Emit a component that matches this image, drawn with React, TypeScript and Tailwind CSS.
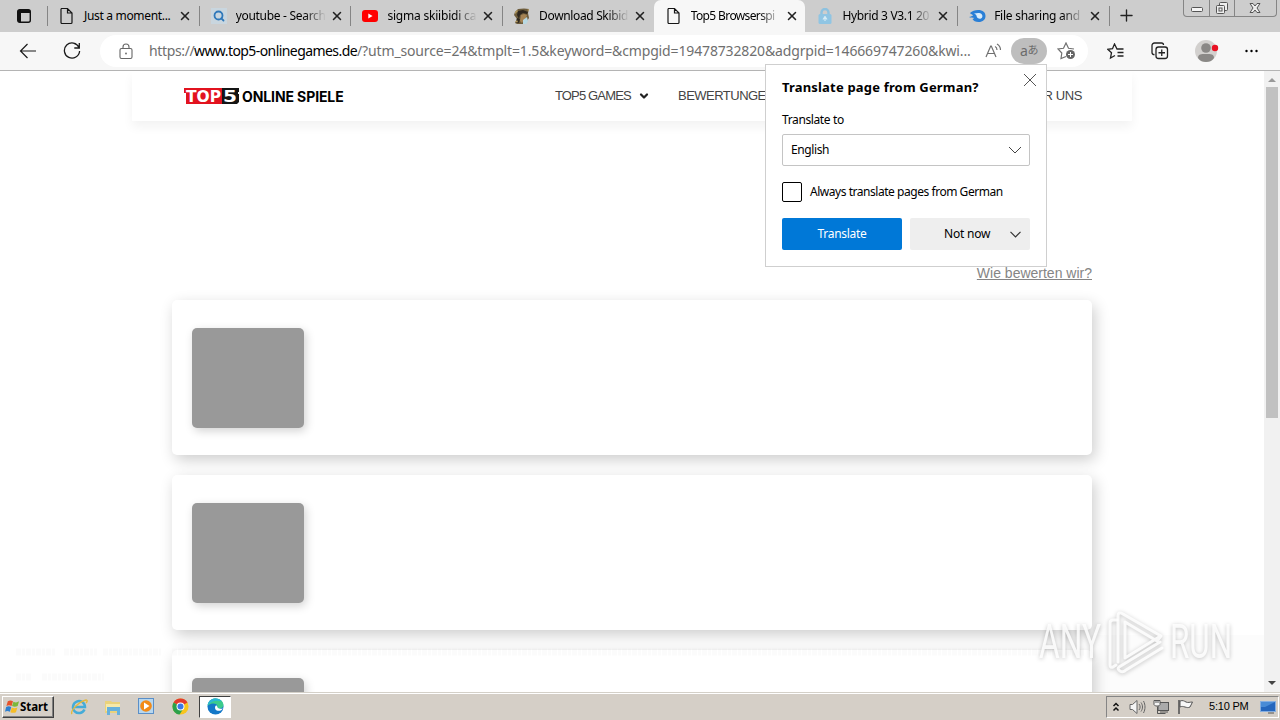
import React from "react";
import { Search, X, Plus, ChevronDown } from "lucide-react";

const PageIcon = () => (
  <svg width="16" height="18" viewBox="0 0 16 18" fill="none" stroke="#161616" strokeWidth="1.2">
    <path d="M2.5 1.500h6l4.500 4.500v9.500a1 1 0 0 1-1 1h-9a1 1 0 0 1-1-1v-13a1 1 0 0 1 .5-1zM8.500 1.500V6H13" />
  </svg>
);

const SearchIcon = () => (
  <div className="flex h-4 w-4 items-center justify-center bg-[#c9d6df]">
    <Search size={12} strokeWidth={3.6} color="#2f78ba" />
  </div>
);

const YoutubeIcon = () => (
  <svg width="16" height="16" viewBox="0 0 16 16">
    <rect x="0" y="2" width="16" height="12" rx="3" fill="#f00" />
    <path d="M6.3 5.4 10.6 8l-4.3 2.6z" fill="#fff" />
  </svg>
);

const LionIcon = () => (
  <svg width="16" height="16" viewBox="0 0 16 16">
    <path d="M1 4 4 1l6-.5L15 1l-1 4 1 5-4 6H3l-2-1 2-4-3-4z" fill="#6d5c3c" />
    <path d="M4 3l5-1 5 2-1 2-4-1-3 2-1 4-2-4zM3 10l3 1-1 4-3-1z" fill="#2f281f" />
    <path d="M7 7l3-1 3 1-1 3-2 2-2 3-2-2z" fill="#a58354" />
    <path d="M1 4l2-2 1 1-3 3zM13 2l2-1v2zM1 14l2-2 1 2z" fill="#b49a60" />
    <path d="M9 12l4-3 1 4-2 3H9z" fill="#b8d8e2" />
  </svg>
);

const BlueLockIcon = () => (
  <svg width="16" height="16" viewBox="0 0 16 16">
    <path d="M4.500 7V4.500a3.500 3.500 0 0 1 7 0V7" fill="none" stroke="#8dc2e0" strokeWidth="2.4" />
    <rect x="1.500" y="6" width="13" height="10" rx="1.500" fill="#90c5e3" />
    <path d="M8 8v5M8 8.500l-2 3M8 8.500l2 3" stroke="#d5ebf5" strokeWidth="1.200" />
  </svg>
);

const FlameIcon = () => (
  <svg width="17" height="16" viewBox="0 0 17 16">
    <path d="M0 9c2-.5 3-1 4-1.500C3 6 1 6 1 5c2-2 5-3 8-3 5 0 7.500 2.500 7.500 6S14 14 9.500 14c-3 0-5-1-6-3 1-.5 2-1 2-1-2-.5-4 0-5.500-1z" fill="#2a7fd6" />
    <path d="M5 5.500c3-.5 6-1 7.500.5s1 4-.5 4.500-3.500 0-4-1.200S8 7 5 5.500z" fill="#d9ecfb" />
  </svg>
);

const tabs = [
  { icon: <PageIcon />, title: "Just a moment...", cls: "tracking-[-0.32px]" },
  { icon: <SearchIcon />, title: "youtube - Search", cls: "tracking-[-0.3px]" },
  { icon: <YoutubeIcon />, title: "sigma skiibidi ca", cls: "tracking-[-0.2px]" },
  { icon: <LionIcon />, title: "Download Skibid", cls: "tracking-[-0.35px]" },
  { icon: <PageIcon />, title: "Top5 Browserspi", cls: "tracking-[-0.62px]", active: true },
  { icon: <BlueLockIcon />, title: "Hybrid 3 V3.1 20", cls: "tracking-[-0.33px]" },
  { icon: <FlameIcon />, title: "File sharing and", cls: "tracking-[-0.25px]" },
];

function TabStrip() {
  return (
    <div className="flex h-8 shrink-0 bg-[#cdcdcd]">
      <div className="flex w-[47px] items-center pl-[17px]">
        <svg width="14" height="14" viewBox="0 0 14 14">
          <rect x=".7" y=".7" width="12.600" height="12.600" rx="2" fill="none" stroke="#111" strokeWidth="1.4" />
          <path d="M1 1h12v3H1zM1 4h3v9H1z" fill="#111" />
        </svg>
      </div>
      {tabs.map((t, i) => (
        <div
          key={t.title}
          className={"flex w-[151.7px] items-center " + (t.active ? "rounded-t-[7px] bg-[#f7f7f7]" : "")}
        >
          <div className={"mr-[11px] h-5 w-px " + (i === 4 || i === 5 ? "bg-transparent" : "bg-[#858585]")} />
          <div className="flex w-[25px] shrink-0 items-center">{t.icon}</div>
          <div
            className={
              "w-[90px] shrink-0 whitespace-pre text-[12px] leading-[18px] text-black " +
              t.cls +
              (i ? " [mask-image:linear-gradient(to_right,black_68px,transparent_90px)]" : "")
            }
          >
            {t.title}
          </div>
          <X size={14} strokeWidth={2.6} color="#222" className="ml-[4px]" />
        </div>
      ))}
      <div className="flex grow">
        <div className="mt-1.5 h-5 w-px bg-[#858585]" />
        <Plus size={19} strokeWidth={1.700} color="#222" className="ml-[7px] mt-[6px]" />
        <div className="ml-auto mr-[3px] flex h-[17px] w-[94px] rounded-b border border-t-0 border-[#858585]">
          <div className="flex w-[26px] items-center justify-center border-r border-[#858585]">
            <svg width="14" height="12"><rect x="1.500" y="5.500" width="11" height="4" rx="1" fill="#f5f5f5" stroke="#555" /></svg>
          </div>
          <div className="flex w-[25px] items-center justify-center border-r border-[#858585]">
            <svg width="14" height="14" fill="#eee" stroke="#555">
              <rect x="4.500" y="1.500" width="8" height="8" rx="1" />
              <rect x="1.500" y="4.500" width="8" height="8" rx="1" />
              <rect x="4" y="7" width="3" height="3" />
            </svg>
          </div>
          <div className="flex grow items-center justify-center pr-0.5">
            <svg width="14" height="12" viewBox="0 0 14 12">
              <path d="M2 1.500h3l2 2.500 2-2.500h3L9 6l3 4.500H9L7 8l-2 2.500H2L5 6z" fill="#eee" stroke="#555" />
            </svg>
          </div>
        </div>
      </div>
    </div>
  );
}

function Toolbar() {
  return (
    <div className="flex h-[39px] shrink-0 items-center border-b border-[#b4b4b4] bg-[#f7f7f7]">
      <svg width="18" height="16" viewBox="0 0 18 16" fill="none" stroke="#1a1a1a" strokeWidth="1.200" className="ml-[19px]">
        <path d="M17 8H1.500M8.500 1 1.500 8l7 7" />
      </svg>
      <svg width="18" height="18" viewBox="0 0 18 18" fill="none" stroke="#1a1a1a" strokeWidth="1.300" className="ml-[26px]">
        <path d="M16 5.500A7.600 7.600 0 1 0 16.600 9M16.300 1v5h-5" />
      </svg>
      <div className="ml-[19px] flex h-8 w-[988px] items-center rounded-full bg-white pl-[19px]">
        <svg width="14" height="17" viewBox="0 0 14 17" fill="none" stroke="#666" strokeWidth="1.100">
          <rect x="1" y="5.500" width="12" height="10" rx="1.500" />
          <path d="M4 5.500V4a3 3 0 0 1 6 0v1.500" />
          <circle cx="7" cy="10.500" r=".9" fill="#666" stroke="none" />
        </svg>
        <div className="ml-[16px] flex w-[823px] whitespace-pre text-[14px] leading-5 text-[#6f6f6f]">
          <span className="w-[45px] tracking-[-0.35px]">https://</span>
          <span className="w-[163px] tracking-[-0.57px] text-black">www.top5-onlinegames.de</span>
          <span className="tracking-[-0.14px]">/?utm_source=24&amp;tmplt=1.5&amp;keyword=&amp;cmpgid=19478732820&amp;adgrpid=146669747260&amp;kwi...</span>
        </div>
        <svg width="18" height="16" viewBox="0 0 18 16" fill="none" stroke="#707070" strokeWidth="1.200" className="ml-[13px]">
          <path d="M1 14 5.700 3h.6L11 14M2.800 10.500h6.500M10 3.500c1.500.7 2 2 2 3.500M12 1c2.500 1.500 3.500 3.500 3.500 6" />
        </svg>
        <div className="ml-2 flex h-[26px] w-9 items-center justify-center rounded-full bg-[#bebebe] pb-0.5 text-[14px] tracking-[-0.5px] text-[#6b6b6b]">
          a<span className="text-[11px]">あ</span>
        </div>
        <svg width="19" height="18" viewBox="0 0 19 18" className="ml-[10px]">
          <path d="M9 14.500 4 16.500l.8-5.500L1 7l5.500-.7L9 1l2.500 5.300L17 7" fill="none" stroke="#707070" strokeWidth="1.200" />
          <circle cx="13.500" cy="12.500" r="4.500" fill="#666" />
          <path d="M13.500 10v5M11 12.500h5" stroke="#fff" />
        </svg>
      </div>
      <svg width="18" height="17" viewBox="0 0 18 17" fill="none" stroke="#222" strokeWidth="1.300" className="ml-[19px]">
        <path d="M16.500 6H10L7.500 1 5.500 5.700.8 6.300 4.500 9.700l-1 5.300L8 12.500M10.500 9.500h6M10.500 13h6" />
      </svg>
      <svg width="18" height="18" viewBox="0 0 18 18" fill="none" stroke="#222" strokeWidth="1.300" className="ml-[26px]">
        <path d="M3.500 12.500A2 2 0 0 1 1 10.500V3.500A2.500 2.500 0 0 1 3.500 1h7a2 2 0 0 1 2 2" />
        <rect x="5" y="5" width="11.500" height="11.500" rx="2.500" />
        <path d="M10.750 7.500v6.500M7.500 10.750H14" />
      </svg>
      <svg width="24" height="24" viewBox="0 0 24 24" className="ml-[26px]">
        <circle cx="11" cy="12" r="11" fill="#d2d0ce" />
        <circle cx="11" cy="9" r="4.800" fill="#8a8886" />
        <path d="M3 19c0-4 3-4 8-4s8 0 8 4c-2 3-5 4-8 4s-6-1-8-4z" fill="#8a8886" />
        <circle cx="20" cy="9" r="3.200" fill="#e81123" />
      </svg>
      <svg width="15" height="4" viewBox="0 0 15 4" className="ml-[25px]">
        <circle cx="2.500" cy="2" r="1.200" /><circle cx="7.500" cy="2" r="1.200" /><circle cx="12.500" cy="2" r="1.200" />
      </svg>
    </div>
  );
}

function TranslatePopup() {
  return (
    <div className="absolute left-[765px] top-[64px] z-10 h-[203px] w-[282px] border border-[#cfcfcf] bg-white px-4 pt-[12px] font-['Noto_Sans',sans-serif] text-[12px] text-black">
      <div className="flex justify-between">
        <div className="whitespace-nowrap text-[13px] font-bold leading-5 tracking-[0.18px]">Translate page from German?</div>
        <svg width="12" height="12" viewBox="0 0 12 12" stroke="#555" className="-mr-[6px] -mt-[3px]"><path d="M0 0l12 12M12 0 0 12" /></svg>
      </div>
      <div className="mt-[13px] leading-5 tracking-[-0.38px]">Translate to</div>
      <div className="mt-1 flex h-8 items-center justify-between rounded-[2px] border border-[#c4c4c4] px-2">
        <span className="tracking-[-0.4px]">English</span>
        <svg width="12" height="8" viewBox="0 0 12 8" fill="none" stroke="#444"><path d="M0 1l6 6 6-6" /></svg>
      </div>
      <div className="mt-4 flex h-5 items-center">
        <div className="h-5 w-5 rounded-[2px] border border-black" />
        <span className="ml-2 whitespace-nowrap tracking-[-0.46px]">Always translate pages from German</span>
      </div>
      <div className="mt-4 flex gap-2">
        <div className="flex h-8 w-[120px] items-center justify-center rounded-[2px] bg-[#0078d7] tracking-[-0.3px] text-white">Translate</div>
        <div className="flex h-8 w-[120px] items-center rounded-[2px] bg-[#eee] pl-[34px]">
          <span className="w-[66px] tracking-[-0.2px]">Not now</span>
          <svg width="11" height="7" viewBox="0 0 11 7" fill="none" stroke="#333" strokeWidth="1.200"><path d="M.5.8l5 5 5-5" /></svg>
        </div>
      </div>
    </div>
  );
}

const Card = () => (
  <div className="h-[155px] w-[920px] shrink-0 rounded-[5px] bg-white pl-5 pt-7 shadow-[3px_5px_15px_rgba(0,0,0,0.2)]">
    <div className="h-[100px] w-[112px] rounded-[5px] bg-[#999] shadow-[2px_3px_10px_rgba(0,0,0,0.18)]" />
  </div>
);

function Watermark() {
  return (
    <div className="absolute left-[1038px] top-[608px] z-10 h-[68px] w-[200px]">
      <svg width="200" height="68" viewBox="0 0 200 68" className="drop-shadow-[0_1px_2px_rgba(0,0,0,0.28)]">
        <g fill="white" fillOpacity=".85" fontFamily="Roboto, sans-serif" fontSize="48">
          <text x="1" y="50" textLength="62" lengthAdjust="spacingAndGlyphs">ANY</text>
          <text x="132" y="50" textLength="62" lengthAdjust="spacingAndGlyphs">RUN</text>
        </g>
        <g fill="none" stroke="#fff" strokeOpacity=".85" strokeWidth="3" strokeLinejoin="round" strokeLinecap="round">
          <path d="M79 12h-4q-3 0-3 3v42q0 3 3 2l3-2" />
          <path d="M80 54V8q0-5 5-2l38 22-4 5-32-19v36l34-21" />
          <path d="M122 34 81 59q-2 2 1 4 3 2 6-1l36-22" />
        </g>
      </svg>
    </div>
  );
}

function CookieBanner() {
  return (
    <svg width="1264" height="57" className="absolute left-0 top-[635px]">
      <rect x="1092" width="172" height="57" fill="#000" fillOpacity=".012" />
      <g stroke="#000" strokeOpacity=".016" strokeWidth="7">
        <path d="M16 17h40M64 17h33M103 17h58M172 17h912" strokeDasharray="5 1 3 1" />
        <path d="M16 42h16M42 42h62" strokeDasharray="5 1 3 1" />
      </g>
    </svg>
  );
}

function WebPage() {
  return (
    <div className="flex h-[621px] shrink-0 overflow-hidden bg-white">
      <div className="flex w-[1264px] flex-col overflow-hidden">
        <div className="ml-[132px] flex h-[50px] w-[1000px] shrink-0 items-center bg-white pl-[52px] font-['Liberation_Sans',sans-serif] text-[13px] text-[#444] shadow-[0_6px_10px_rgba(0,0,0,0.05)]">
          <svg width="55" height="16" viewBox="0 0 55 16">
            <path d="M0 0h38v16H2V5H0z" fill="#e2131f" />
            <path d="M38 0h17v4h-1v2h1v8l-2 2H38z" fill="#151515" />
            <text x="2" y="14" textLength="35" lengthAdjust="spacingAndGlyphs" fontFamily="DejaVu Sans, sans-serif" fontWeight="700" fontSize="16" fill="#fff">TOP</text>
            <text x="39" y="14" textLength="14" lengthAdjust="spacingAndGlyphs" fontFamily="DejaVu Sans, sans-serif" fontWeight="700" fontSize="16" fill="#fff">5</text>
          </svg>
          <span className="ml-[3px] w-[313px] whitespace-nowrap font-['Inter',sans-serif] text-[14px] font-bold tracking-[-0.1px] text-black">ONLINE SPIELE</span>
          <span className="w-[83px] whitespace-nowrap tracking-[-0.85px]">TOP5 GAMES</span>
          <ChevronDown size={12} strokeWidth={4.500} color="#222" />
          <span className="ml-[28px] w-[341px] whitespace-nowrap tracking-[-0.52px]">BEWERTUNGEN</span>
          <span className="-ml-px whitespace-nowrap tracking-[-0.4px]">ÜBER UNS</span>
        </div>
        <div className="mt-[144px] flex w-[1092px] shrink-0 justify-end font-['Liberation_Sans',sans-serif] text-[14px] leading-4 text-[#858585] underline">Wie bewerten wir?</div>
        <div className="mt-[19px] flex flex-col gap-5 pl-[172px]">
          <Card />
          <Card />
          <Card />
        </div>
      </div>
      <div className="flex w-4 flex-col items-center bg-[#f1f1f1]">
        <svg width="8" height="16"><path d="M0 11l4-4 4 4z" fill="#999" /></svg>
        <div className="h-[331px] w-3 bg-[#c1c1c1]" />
        <svg width="8" height="16" className="mt-auto"><path d="M0 5h8L4 9z" fill="#444" /></svg>
      </div>
    </div>
  );
}

function Taskbar() {
  return (
    <div className="flex h-7 shrink-0 items-center border-t border-[#d4d0c8] bg-[#d5cfc7] shadow-[inset_0_1px_0_white]">
      <div className="ml-0.5 flex h-[22px] w-[52px] items-center border border-b-[#404040] border-l-white border-r-[#404040] border-t-white pl-[2px] font-['Noto_Sans',sans-serif] text-[11.5px] font-bold tracking-[-0.1px] text-black shadow-[inset_-1px_-1px_0_#808080]">
        <svg width="15" height="15" viewBox="0 0 16 15" className="shrink-0">
          <path d="M3 2c2-1.500 4-1 5.500 0L7 7c-2-1-3.500-1-5.500 0z" fill="#e6532b" />
          <path d="M9 2.500c2 1 4 1 6-.5l-1.500 5c-2 1-4 1-6 0z" fill="#7cb83a" />
          <path d="M1.200 8c2-1 3.500-1 5.500 0l-1.500 5c-2-1-3.500-1-5.200 0z" fill="#2d7fd0" />
          <path d="M7.200 8.500c2 1 4 1 6 0l-1.500 5c-2 1-4 1-6 0z" fill="#f6bd27" />
        </svg>
        <span>Start</span>
      </div>
      <svg width="18" height="18" viewBox="0 0 18 18" className="ml-[16px]">
        <path d="M14.500 11.500A6 6 0 1 1 15 9H5" fill="none" stroke="#45acd8" strokeWidth="2.500" />
        <path d="M2 16C0 13 8 4 16 2c2 0 1 2 0 3" fill="none" stroke="#e4b93c" strokeWidth="1.400" />
      </svg>
      <svg width="18" height="18" viewBox="0 0 18 18" className="ml-4">
        <path d="M1 3h6l1 1h8v11H1z" fill="#ead27b" />
        <path d="M2 6h14v7H2z" fill="#f6e9a9" />
        <path d="M3 9h13v8h-3v-4H6v4H3z" fill="#67b1dc" />
      </svg>
      <svg width="17" height="17" viewBox="0 0 17 17" className="ml-4">
        <rect x=".5" y=".5" width="15" height="15" fill="#b8d7ee" stroke="#5a8fc8" />
        <circle cx="8" cy="8" r="5.800" fill="#f28a16" />
        <path d="M6 4.500 11.500 8 6 11.500z" fill="#fff" />
      </svg>
      <svg width="17" height="17" viewBox="0 0 18 18" className="ml-[17px]">
        <circle cx="9" cy="9" r="8.500" fill="#f8c51c" />
        <path d="M9 9 1.600 4.800A8.500 8.500 0 0 1 16.400 4.800z" fill="#e33b2e" />
        <path d="M9 9 1.600 4.800A8.500 8.500 0 0 0 8 17.500l4-6z" fill="#2ba14b" />
        <circle cx="9" cy="9" r="4.200" fill="#fff" /><circle cx="9" cy="9" r="3.200" fill="#3b78e7" />
      </svg>
      <div className="ml-[10px] flex h-[22px] w-[32px] items-center justify-center border border-b-white border-l-[#404040] border-r-white border-t-[#404040] bg-white">
        <svg width="17" height="17" viewBox="0 0 18 18">
          <circle cx="9" cy="9" r="8.500" fill="#1478c8" />
          <path d="M.5 8C2 2 6 .5 9 .5c5 0 8.500 3.500 8.500 7 0 3-3 4-5.500 3.500-2-.5-1-1.500-1-2.500C11 6 6 4 .5 8z" fill="#3ccb8c" />
          <path d="M.5 8C1.500 2 6 .5 9 .5c3 0 5 1 6.500 3C10 2 4 3 .5 8z" fill="#2bb7d6" />
          <path d="M10.800 9c0 1.500 2 3 6 2-1 1.500-3 3-5.500 2.500C8.500 13 8 10 9 8.500c.7-.8 1.800-.5 1.800.5z" fill="#fff" />
        </svg>
      </div>
      <div className="ml-auto mr-px flex h-[22px] w-[173px] items-center border border-b-white border-l-[#858585] border-r-white border-t-[#858585]">
        <svg width="8" height="10" viewBox="0 0 8 10" fill="none" stroke="#111" strokeWidth="1.500" className="ml-[5px]"><path d="M1.500 4 4 1.500 6.500 4M1.500 8.500 4 6l2.500 2.500" /></svg>
        <svg width="17" height="16" viewBox="0 0 17 16" fill="none" stroke="#666" className="ml-[9px]">
          <path d="M1 5.500h2.500L8 1.500v13l-4.500-4H1z" fill="#f5f5f5" /><path d="M10 5c1.500 2 1.500 4 0 6M12 3.500c2 3 2 6 0 9M14.500 2c2 4 2 8 0 12" />
        </svg>
        <svg width="17" height="16" viewBox="0 0 17 16" stroke="#555" className="ml-[7px]">
          <rect x="5" y="3.500" width="10.500" height="8" fill="#aaa" /><path d="M4.500 8v6.500h8M7 13h8" fill="none" /><path d="M1 1.500h6v4L5.500 7h-3L1 5.500z" fill="#f5f5f5" /><path d="M3 1v3M5 1v3" />
        </svg>
        <svg width="17" height="16" viewBox="0 0 17 16" stroke="#555" className="ml-[7px]">
          <path d="M2 1v14" strokeWidth="1.600" /><path d="M3 2c3-1 4 0 6 1s4 0 6.500 0L13 8c-2 1-3 .5-5 0s-3-1-5 0z" fill="#f8f8f8" />
        </svg>
        <span className="ml-[15px] w-[51px] whitespace-nowrap font-['Liberation_Sans',sans-serif] text-[11px] tracking-[-0.2px] text-black">5:10 PM</span>
        <svg width="16" height="14" viewBox="0 0 16 14"><rect x=".5" y="1.500" width="15" height="10" fill="#2566bd" stroke="#86aee0" /><path d="M1 2h14L5 7H1z" fill="#498bd6" /><path d="M8 13h6" stroke="#555" /></svg>
      </div>
    </div>
  );
}

export default function App() {
  return (
    <div className="relative flex h-[720px] w-[1280px] flex-col overflow-hidden bg-white font-['Noto_Sans','Noto_Sans_CJK_JP',sans-serif]">
      <TabStrip />
      <Toolbar />
      <WebPage />
      <Taskbar />
      <CookieBanner />
      <TranslatePopup />
      <Watermark />
    </div>
  );
}
